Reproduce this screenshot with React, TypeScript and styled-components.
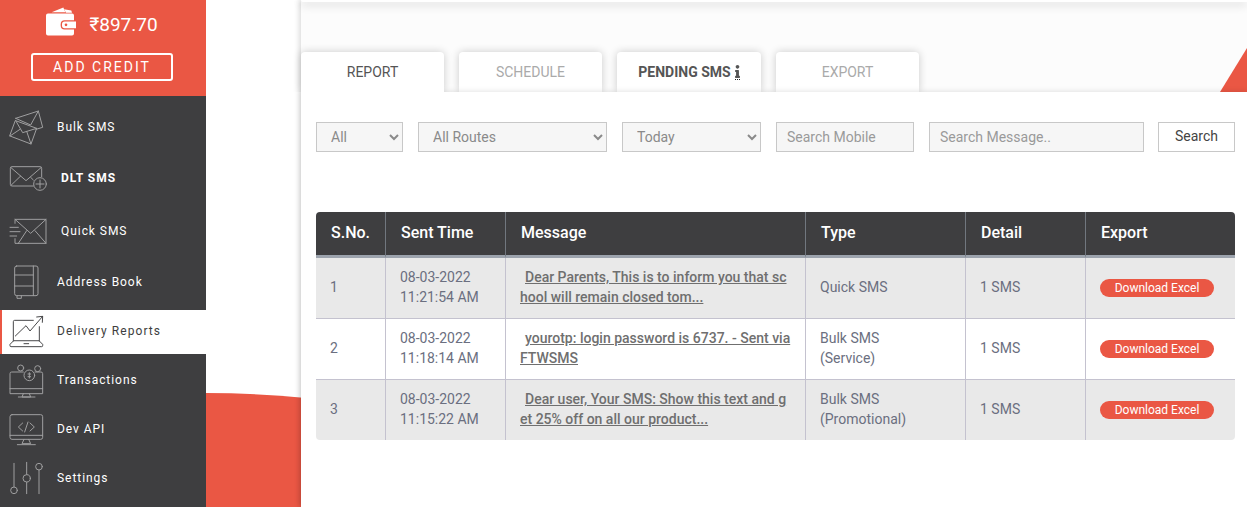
import React from "react";
import styled, { createGlobalStyle } from "styled-components";
import { FaInfo } from "react-icons/fa";

const RED = "#ea5744";
const DARK = "#3e3e40";

const Global = createGlobalStyle`
  html, body { margin: 0; padding: 0; background: #fff; }
  body { font-family: Roboto, "Liberation Sans", sans-serif; }
  * { box-sizing: border-box; }
`;

const Shell = styled.div`
  display: flex;
  width: 1247px;
  height: 507px;
  overflow: hidden;
`;

const Sidebar = styled.aside`
  flex: 0 0 206px;
  background: ${DARK};
  z-index: 2;
`;

const WalletHead = styled.div`
  height: 96px;
  background: ${RED};
  padding-top: 5px;
  display: flex;
  flex-direction: column;
  align-items: center;
`;

const Balance = styled.div`
  display: flex;
  align-items: center;
  gap: 12px;
  height: 32px;
  color: #fff;
  font-size: 19px;
  margin-left: -3px;
`;

const Amount = styled.span`
  margin-top: 7px;
`;

const CreditButton = styled.button`
  margin: 16px 2px 0 0;
  width: 142px;
  height: 28px;
  border: 2px solid #fff;
  border-radius: 3px;
  background: transparent;
  color: #fff;
  font: 400 14px Roboto, sans-serif;
  letter-spacing: 2px;
  padding: 0;
`;

const NavList = styled.nav`
  display: flex;
  flex-direction: column;
`;

const NavRow = styled.div<{ $h: number; $active?: boolean; $pb?: number }>`
  display: flex;
  align-items: center;
  height: ${(p) => p.$h}px;
  padding-left: 8px;
  padding-bottom: ${(p) => p.$pb ?? 0}px;
  background: ${(p) => (p.$active ? "#fff" : "transparent")};
  box-shadow: ${(p) => (p.$active ? `inset 2px 0 0 ${RED}` : "none")};
  color: ${(p) => (p.$active ? DARK : "#fff")};
`;

const NavIcon = styled.svg`
  flex: 0 0 46px;
  width: 46px;
  height: 46px;
  fill: none;
  stroke: currentColor;
  stroke-width: 3;
  stroke-linejoin: round;
  stroke-linecap: round;
  opacity: 0.5;
  overflow: visible;
`;

const ActiveIcon = styled(NavIcon)`
  opacity: 0.95;
`;

const NavLabel = styled.span<{ $bold?: boolean; $indent?: number }>`
  margin-left: ${(p) => p.$indent ?? 3}px;
  margin-top: 2px;
  font-size: 12px;
  font-weight: ${(p) => (p.$bold ? 700 : 400)};
  letter-spacing: 0.95px;
  white-space: nowrap;
`;

const ActiveLabel = styled(NavLabel)`
  margin-top: 0;
  margin-bottom: 2px;
  letter-spacing: 1.08px;
`;

const Stage = styled.main`
  flex: 1;
  position: relative;
  padding-left: 95px;
  background: #fff;
`;

const Blob = styled.svg`
  position: absolute;
  left: 0;
  top: 392px;
  width: 100px;
  height: 115px;
`;

const Column = styled.div`
  position: relative;
  height: 507px;
  background: #fcfcfc;
  box-shadow: -2px 0 5px rgba(0, 0, 0, 0.14);
`;

const Wedge = styled.svg`
  position: absolute;
  right: 0;
  top: 48px;
  width: 27px;
  height: 44px;
`;

const TopCard = styled.div`
  height: 2px;
  background: #fff;
  border-radius: 0 0 0 4px;
  box-shadow: 0 2px 10px rgba(0, 0, 0, 0.32);
`;

const TabBar = styled.div`
  display: flex;
  gap: 15px;
  margin-top: 50px;
  height: 40px;
`;

const Tab = styled.div<{ $w: number; $active?: boolean; $strong?: boolean }>`
  position: relative;
  z-index: ${(p) => (p.$active ? 2 : 0)};
  width: ${(p) => p.$w}px;
  height: 40px;
  display: flex;
  align-items: center;
  justify-content: center;
  background: #fff;
  border-radius: 4px 4px 0 0;
  box-shadow: 0 0 8px rgba(0, 0, 0, 0.2);
  clip-path: ${(p) => (p.$active ? "inset(-10px -10px 0 -10px)" : "none")};
  font-size: 14px;
  font-weight: ${(p) => (p.$strong ? 700 : 400)};
  color: ${(p) => (p.$active || p.$strong ? "#555" : "#aaa")};
`;

const InfoMark = styled.abbr`
  display: inline-flex;
  align-items: center;
  margin-left: 4px;
  height: 15px;
  border-bottom: 1px dotted #222;
  color: #555;
  svg { width: 5px; height: 13px; }
`;

const Panel = styled.section`
  position: relative;
  z-index: 1;
  height: 415px;
  background: #fff;
  box-shadow: 0 -1px 5px rgba(0, 0, 0, 0.1);
  padding: 30px 12px 0 15px;
`;

const FilterBar = styled.div`
  display: flex;
  gap: 15px;
  height: 30px;
`;

const Select = styled.select<{ $w: number }>`
  width: ${(p) => p.$w}px;
  height: 30px;
  padding: 0 6px 0 10px;
  border: 1px solid #c8c8c8;
  border-radius: 0;
  background: #f6f6f6;
  color: #8a8a8a;
  font: 400 14px Roboto, sans-serif;
`;

const SearchField = styled.input<{ $w: number }>`
  width: ${(p) => p.$w}px;
  height: 30px;
  padding: 0 10px;
  border: 1px solid #c8c8c8;
  border-radius: 0;
  background: #f6f6f6;
  font: 400 14px Roboto, sans-serif;
  &::placeholder { color: #9a9a9a; opacity: 1; }
`;

const SearchButton = styled.button`
  width: 77px;
  height: 30px;
  margin-left: -1px;
  padding: 0 0 2px;
  border: 1px solid #c8c8c8;
  background: #fff;
  color: #444;
  font: 400 14px Roboto, sans-serif;
`;

const Table = styled.table`
  margin-top: 60px;
  width: 919px;
  table-layout: fixed;
  border-collapse: separate;
  border-spacing: 0;
  border-radius: 4px;
  overflow: hidden;
  font-size: 14px;
  color: #6b6f80;
`;

const HeadCell = styled.th`
  height: 46px;
  padding: 0 15px 3px;
  background: ${DARK};
  border-bottom: 3px solid #9ca3ad;
  border-left: 1px solid #71777f;
  color: #fff;
  text-align: left;
  font-size: 16px;
  font-weight: 500;
  &:first-child { border-left: 0; }
`;

const Row = styled.tr<{ $shade?: boolean }>`
  background: ${(p) => (p.$shade ? "#e9e9e9" : "#fff")};
`;

const Cell = styled.td`
  height: 61px;
  padding: 0 13px 2px 14px;
  border-left: 1px solid #c4c2cf;
  border-bottom: 1px solid #c4c2cf;
  line-height: 20px;
  vertical-align: middle;
  &:first-child { border-left: 0; }
  tr:last-child > & { border-bottom: 0; height: 60px; }
`;

const MessageCell = styled(Cell)`
  word-break: break-all;
  text-indent: 5px;
`;

const MessageLink = styled.a`
  color: #6f6f6f;
  font-weight: 500;
  text-decoration: underline;
`;

const ExportBadge = styled.span`
  display: block;
  width: 114px;
  height: 18px;
  margin-top: 2px;
  border-radius: 9px;
  background: ${RED};
  color: #fff;
  font-size: 12px;
  line-height: 18px;
  text-align: center;
`;

const rows = [
  { n: 1, d: "08-03-2022", t: "11:21:54 AM", m: "Dear Parents, This is to inform you that school will remain closed tom...", ty: ["Quick SMS"] },
  { n: 2, d: "08-03-2022", t: "11:18:14 AM", m: "yourotp: login password is 6737. - Sent via FTWSMS", ty: ["Bulk SMS", "(Service)"] },
  { n: 3, d: "08-03-2022", t: "11:15:22 AM", m: "Dear user, Your SMS: Show this text and get 25% off on all our product...", ty: ["Bulk SMS", "(Promotional)"] },
];

const Wallet = () => (
  <svg viewBox="135 18 96 92" width="32" height="31" aria-hidden="true">
    <path d="M155 36 L190 22 L196 36 Z" fill="#fff" />
    <path d="M192 27 L214 31 L216 38 L198 38 Z" fill="#fff" />
    <path d="M144 40 H216 a6 6 0 0 1 6 6 V60 H194 a12 12 0 0 0 -12 12 V76 a12 12 0 0 0 12 12 H222 V100 a6 6 0 0 1 -6 6 H144 a6 6 0 0 1 -6 -6 V46 a6 6 0 0 1 6 -6 Z" fill="#fff" />
    <path d="M194 64 H228 V84 H194 a8 8 0 0 1 -8 -8 V72 a8 8 0 0 1 8 -8 Z" fill="#fff" />
    <circle cx="198" cy="74" r="4" fill={RED} />
  </svg>
);

export default function App() {
  return (
    <>
      <Global />
      <Shell>
        <Sidebar>
          <WalletHead>
            <Balance>
              <Wallet />
              <Amount>₹897.70</Amount>
            </Balance>
            <CreditButton>ADD CREDIT</CreditButton>
          </WalletHead>
          <NavList>
            <NavRow $h={60}>
              <NavIcon viewBox="24 309 138 138">
                <path d="M47 355 L115 333 L128 382 L108 388 M47 355 L92 375 L115 333" />
                <path d="M47 362 L110 385 L93 432 L30 408 Z" />
                <path d="M47 362 L68 398 L110 385 M30 408 L60 388 M93 432 L80 394" />
              </NavIcon>
              <NavLabel>Bulk SMS</NavLabel>
            </NavRow>
            <NavRow $h={42}>
              <NavIcon viewBox="24 462 138 138">
                <path d="M100 558 H36 a5 5 0 0 1 -5 -5 V505 a5 5 0 0 1 5 -5 H120 a5 5 0 0 1 5 5 V530" />
                <path d="M33 503 L78 542 L123 503 M33 556 L62 528 M92 532 L100 540" />
                <circle cx="120" cy="552" r="19" />
                <path d="M120 540 V564 M108 552 H132" />
              </NavIcon>
              <NavLabel $bold $indent={7}>DLT SMS</NavLabel>
            </NavRow>
            <NavRow $h={64}>
              <NavIcon viewBox="24 621 138 138">
                <path d="M45 670 V658 H138 V730 H55 M45 716 V730 H55" />
                <path d="M45 658 L92 700 L138 658 M55 730 L80 692 M138 730 L105 692" />
                <path d="M30 682 H55 M30 695 H60 M30 708 H50" />
              </NavIcon>
              <NavLabel $indent={7}>Quick SMS</NavLabel>
            </NavRow>
            <NavRow $h={48} $pb={10}>
              <NavIcon viewBox="24 9 138 138">
                <path d="M50 33 H108 a6 6 0 0 1 6 6 V116 a6 6 0 0 1 -6 6 H50 a6 6 0 0 1 -6 -6 V39 a6 6 0 0 1 6 -6 Z" />
                <path d="M100 33 V122 M44 60 H100 M44 93 H100 M51 122 V130 H64 V122" />
              </NavIcon>
              <NavLabel>Address Book</NavLabel>
            </NavRow>
            <NavRow $h={44} $active>
              <ActiveIcon viewBox="24 162 138 138">
                <path d="M40 258 V200 a4 4 0 0 1 4 -4 H100 M118 215 V258" />
                <path d="M40 258 L30 268 V272 a3 3 0 0 0 3 3 H125 a3 3 0 0 0 3 -3 V268 L118 258 Z" />
                <path d="M46 243 L78 212 L90 228 L128 184 M110 186 L128 184 L127 202 M72 266 H86" />
              </ActiveIcon>
              <ActiveLabel>Delivery Reports</ActiveLabel>
            </NavRow>
            <NavRow $h={49}>
              <NavIcon viewBox="24 302 138 138">
                <path d="M70 350 H35 a5 5 0 0 0 -5 5 V415 H128 V355 a5 5 0 0 0 -5 -5 H105 M30 400 H128" />
                <path d="M70 415 L66 425 H92 L88 415 M55 425 H105" />
                <circle cx="88" cy="360" r="16" />
                <circle cx="62" cy="338" r="9" />
                <circle cx="113" cy="340" r="9" />
                <path d="M88 352 V368 M84 356 H92 M84 364 H92" />
              </NavIcon>
              <NavLabel>Transactions</NavLabel>
            </NavRow>
            <NavRow $h={49}>
              <NavIcon viewBox="24 449 138 138">
                <path d="M36 478 H122 a6 6 0 0 1 6 6 V546 a6 6 0 0 1 -6 6 H36 a6 6 0 0 1 -6 -6 V484 a6 6 0 0 1 6 -6 Z" />
                <path d="M30 540 H128 M72 552 L66 565 H92 L86 552 M52 568 H106" />
                <path d="M68 503 L55 515 L68 527 M84 500 L74 530 M90 503 L103 515 L90 527" />
              </NavIcon>
              <NavLabel>Dev API</NavLabel>
            </NavRow>
            <NavRow $h={50}>
              <NavIcon viewBox="24 597 138 138">
                <path d="M42 625 V695 M80 622 V658 M80 682 V716 M117 646 V716" />
                <circle cx="42" cy="706" r="10" />
                <circle cx="80" cy="670" r="11" />
                <circle cx="117" cy="635" r="10" />
              </NavIcon>
              <NavLabel>Settings</NavLabel>
            </NavRow>
          </NavList>
        </Sidebar>
        <Stage>
          <Blob viewBox="0 0 100 115" aria-hidden="true">
            <path d="M0 1 Q50 1 100 6 V115 H0 Z" fill={RED} />
          </Blob>
          <Column>
            <Wedge viewBox="0 0 27 44" aria-hidden="true">
              <path d="M0 44 L27 0 V44 Z" fill={RED} />
            </Wedge>
            <TopCard />
            <TabBar>
              <Tab $w={143} $active>REPORT</Tab>
              <Tab $w={143}>SCHEDULE</Tab>
              <Tab $w={144} $strong>
                PENDING SMS
                <InfoMark title="info"><FaInfo /></InfoMark>
              </Tab>
              <Tab $w={143}>EXPORT</Tab>
            </TabBar>
            <Panel>
              <FilterBar>
                <Select $w={87}><option>All</option></Select>
                <Select $w={189}><option>All Routes</option></Select>
                <Select $w={139}><option>Today</option></Select>
                <SearchField $w={138} placeholder="Search Mobile" />
                <SearchField $w={215} placeholder="Search Message.." />
                <SearchButton>Search</SearchButton>
              </FilterBar>
              <Table>
                <colgroup>
                  <col style={{ width: 69 }} />
                  <col style={{ width: 120 }} />
                  <col style={{ width: 300 }} />
                  <col style={{ width: 160 }} />
                  <col style={{ width: 120 }} />
                  <col style={{ width: 150 }} />
                </colgroup>
                <thead>
                  <tr>
                    <HeadCell>S.No.</HeadCell>
                    <HeadCell>Sent Time</HeadCell>
                    <HeadCell>Message</HeadCell>
                    <HeadCell>Type</HeadCell>
                    <HeadCell>Detail</HeadCell>
                    <HeadCell>Export</HeadCell>
                  </tr>
                </thead>
                <tbody>
                  {rows.map((r) => (
                    <Row key={r.n} $shade={r.n % 2 === 1}>
                      <Cell>{r.n}</Cell>
                      <Cell>{r.d}<br />{r.t}</Cell>
                      <MessageCell><MessageLink>{r.m}</MessageLink></MessageCell>
                      <Cell>{r.ty.map((x, i) => <React.Fragment key={x}>{i > 0 && <br />}{x}</React.Fragment>)}</Cell>
                      <Cell>1 SMS</Cell>
                      <Cell><ExportBadge>Download Excel</ExportBadge></Cell>
                    </Row>
                  ))}
                </tbody>
              </Table>
            </Panel>
          </Column>
        </Stage>
      </Shell>
    </>
  );
}
